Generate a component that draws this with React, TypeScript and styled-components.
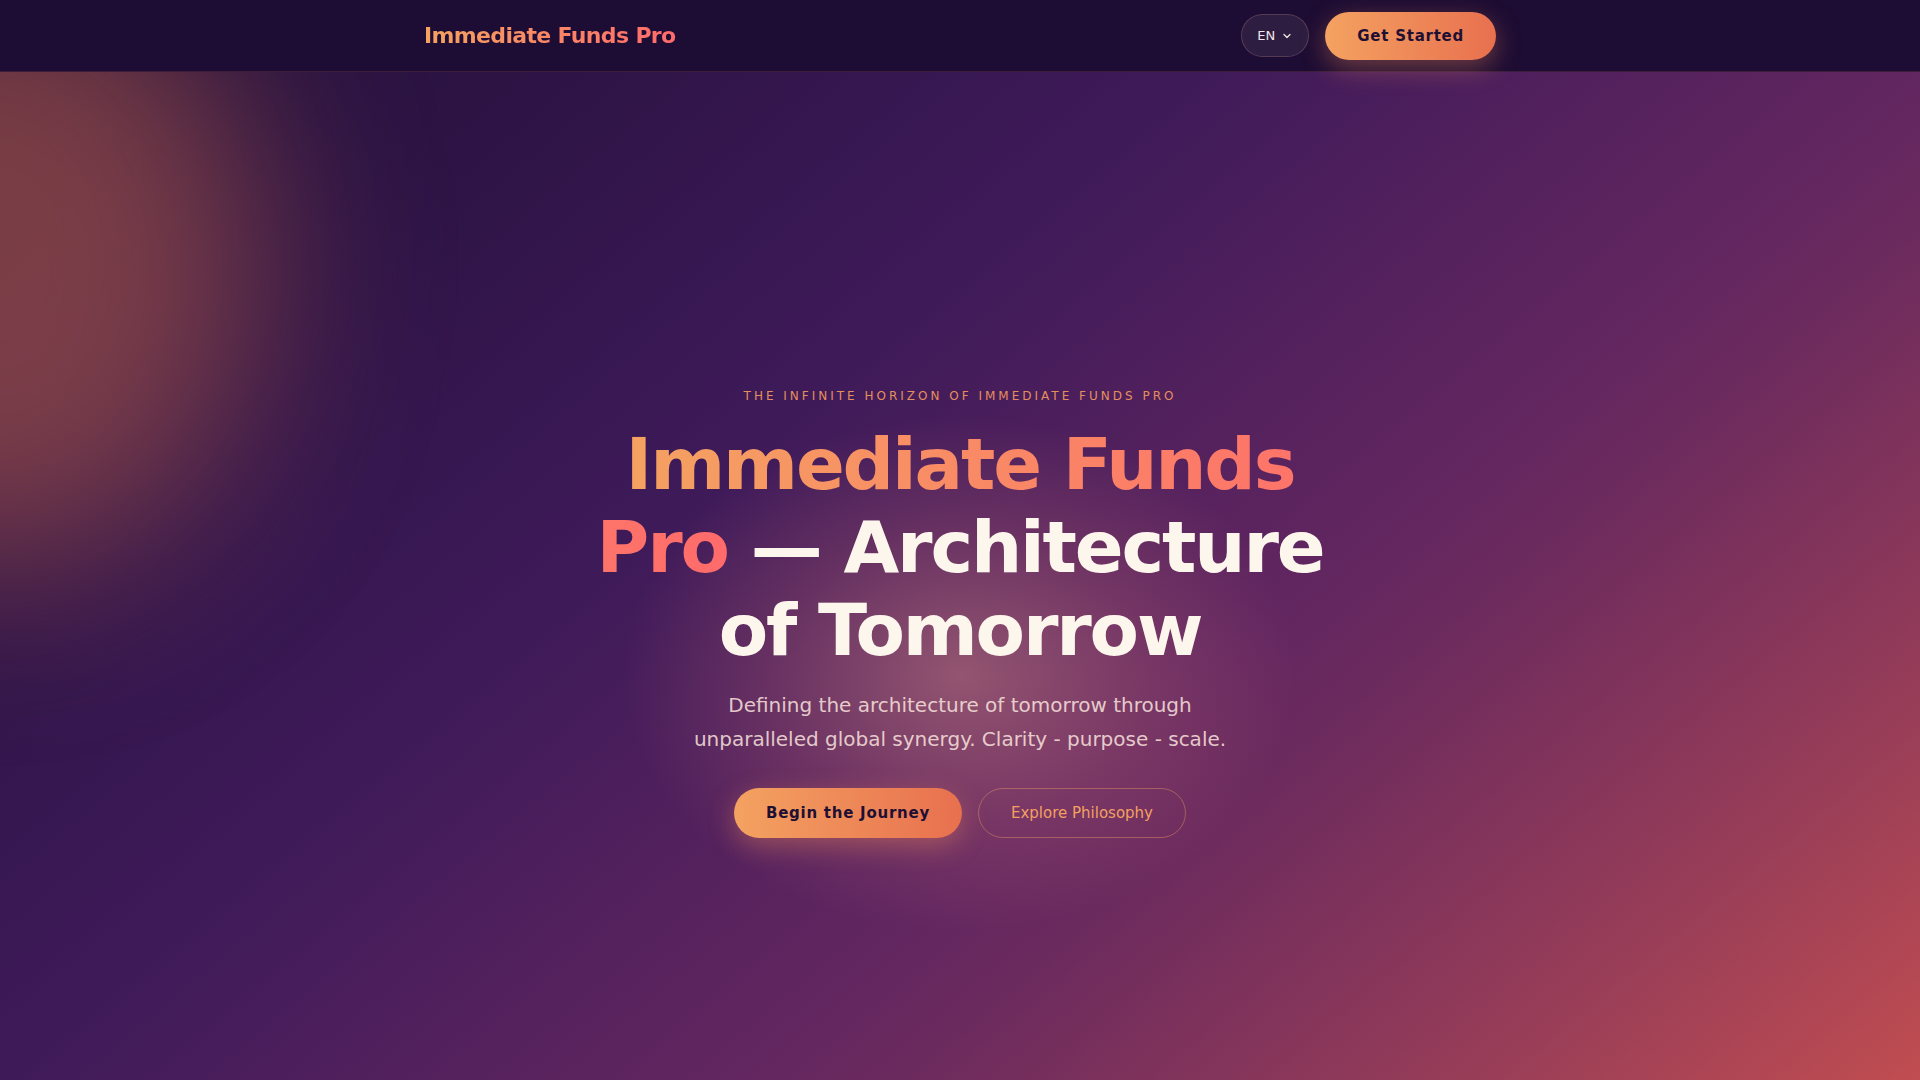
import React from 'react'
import styled, { createGlobalStyle } from 'styled-components'
import { ChevronDown } from 'lucide-react'

const GlobalStyle = createGlobalStyle`
  * {
    box-sizing: border-box;
  }

  html,
  body {
    margin: 0;
    padding: 0;
    background: #1d0c33;
    font-family: 'DejaVu Sans', Verdana, sans-serif;
    -webkit-font-smoothing: antialiased;
  }
`

const Page = styled.div`
  min-height: 100vh;
  display: flex;
  flex-direction: column;
`

const Header = styled.header`
  height: 72px;
  background: #1d0c33;
  border-bottom: 1px solid rgba(255, 140, 120, 0.14);
  position: relative;
  z-index: 2;
`

const HeaderInner = styled.div`
  max-width: 1120px;
  height: 100%;
  margin: 0 auto;
  padding: 0 24px;
  display: flex;
  align-items: center;
  justify-content: space-between;
`

const Logo = styled.a`
  font-size: 22px;
  font-weight: 700;
  letter-spacing: -0.03em;
  text-decoration: none;
  background: linear-gradient(90deg, #f4a261 0%, #ff6b6b 100%);
  -webkit-background-clip: text;
  background-clip: text;
  color: transparent;
`

const Actions = styled.div`
  display: flex;
  align-items: center;
  gap: 16px;
`

const LangButton = styled.button`
  height: 43px;
  width: 68px;
  display: flex;
  align-items: center;
  justify-content: center;
  gap: 6px;
  border-radius: 999px;
  border: 1px solid rgba(255, 180, 160, 0.2);
  background: rgba(255, 255, 255, 0.07);
  color: #f3e6e4;
  font-family: inherit;
  font-size: 13px;
  cursor: pointer;
  padding: 0;
`

const PillButton = styled.button<{ $variant?: 'solid' | 'ghost'; $size?: 'md' | 'lg' }>`
  height: ${({ $size }) => ($size === 'lg' ? '50px' : '48px')};
  padding: 0 32px;
  border-radius: 999px;
  font-family: inherit;
  font-size: 15px;
  cursor: pointer;
  white-space: nowrap;
  ${({ $variant }) =>
    $variant === 'ghost'
      ? `
    background: transparent;
    border: 1px solid rgba(244, 162, 97, 0.4);
    color: #f2a060;
    font-weight: 400;
  `
      : `
    background: linear-gradient(90deg, #f4a261 0%, #e8704f 100%);
    border: none;
    color: #1e0f33;
    font-weight: 700;
    letter-spacing: 0.05em;
    box-shadow: 0 8px 26px rgba(244, 140, 90, 0.38);
  `}
`

const Hero = styled.section`
  position: relative;
  overflow: hidden;
  min-height: 100vh;
  display: flex;
  align-items: center;
  justify-content: center;
  background: linear-gradient(
    140deg,
    #22103a 0%,
    #2e1446 18%,
    #3e1a59 37%,
    #622660 60%,
    #6a2a5e 65%,
    #9a3e58 84%,
    #c8504f 100%
  );
`

const Blob = styled.div`
  position: absolute;
  left: -280px;
  top: -120px;
  width: 540px;
  height: 620px;
  border-radius: 50%;
  background: rgba(225, 115, 80, 0.45);
  filter: blur(90px);
  pointer-events: none;
`

const Glow = styled.div`
  position: absolute;
  left: 50%;
  top: 50%;
  width: 680px;
  height: 520px;
  transform: translate(-50%, -38%);
  border-radius: 50%;
  background: radial-gradient(
    ellipse at center,
    rgba(255, 175, 145, 0.36) 0%,
    rgba(255, 150, 130, 0.15) 40%,
    rgba(255, 150, 130, 0) 70%
  );
  pointer-events: none;
`

const Content = styled.div`
  position: relative;
  z-index: 1;
  padding-top: 3px;
  display: flex;
  flex-direction: column;
  align-items: center;
  text-align: center;
`

const Eyebrow = styled.p`
  margin: 0 0 20px;
  font-size: 12px;
  letter-spacing: 0.25em;
  text-transform: uppercase;
  color: #e58f5c;
`

const Title = styled.h1`
  margin: 0 0 16px;
  max-width: 760px;
  font-size: 72px;
  line-height: 1.15;
  font-weight: 700;
  letter-spacing: -0.03em;
  color: #fdf6ec;
`

const Accent = styled.span`
  background: linear-gradient(90deg, #f4a261 0%, #ff6b6b 100%);
  -webkit-background-clip: text;
  background-clip: text;
  color: transparent;
`

const Lead = styled.p`
  margin: 0 0 32px;
  max-width: 560px;
  font-size: 20px;
  line-height: 34px;
  color: rgba(250, 228, 222, 0.86);
`

const ButtonRow = styled.div`
  display: flex;
  gap: 16px;
`

export default function App() {
  return (
    <Page>
      <GlobalStyle />
      <Header>
        <HeaderInner>
          <Logo href="#">Immediate Funds Pro</Logo>
          <Actions>
            <LangButton>
              EN <ChevronDown size={12} strokeWidth={2.5} />
            </LangButton>
            <PillButton>Get Started</PillButton>
          </Actions>
        </HeaderInner>
      </Header>
      <Hero>
        <Blob />
        <Glow />
        <Content>
          <Eyebrow>The Infinite Horizon of Immediate Funds Pro</Eyebrow>
          <Title>
            <Accent>
              Immediate Funds
              <br />
              Pro
            </Accent>{' '}
            — Architecture
            <br />
            of Tomorrow
          </Title>
          <Lead>
            Defining the architecture of tomorrow through unparalleled global
            synergy. Clarity - purpose - scale.
          </Lead>
          <ButtonRow>
            <PillButton $size="lg">Begin the Journey</PillButton>
            <PillButton $size="lg" $variant="ghost">
              Explore Philosophy
            </PillButton>
          </ButtonRow>
        </Content>
      </Hero>
    </Page>
  )
}
